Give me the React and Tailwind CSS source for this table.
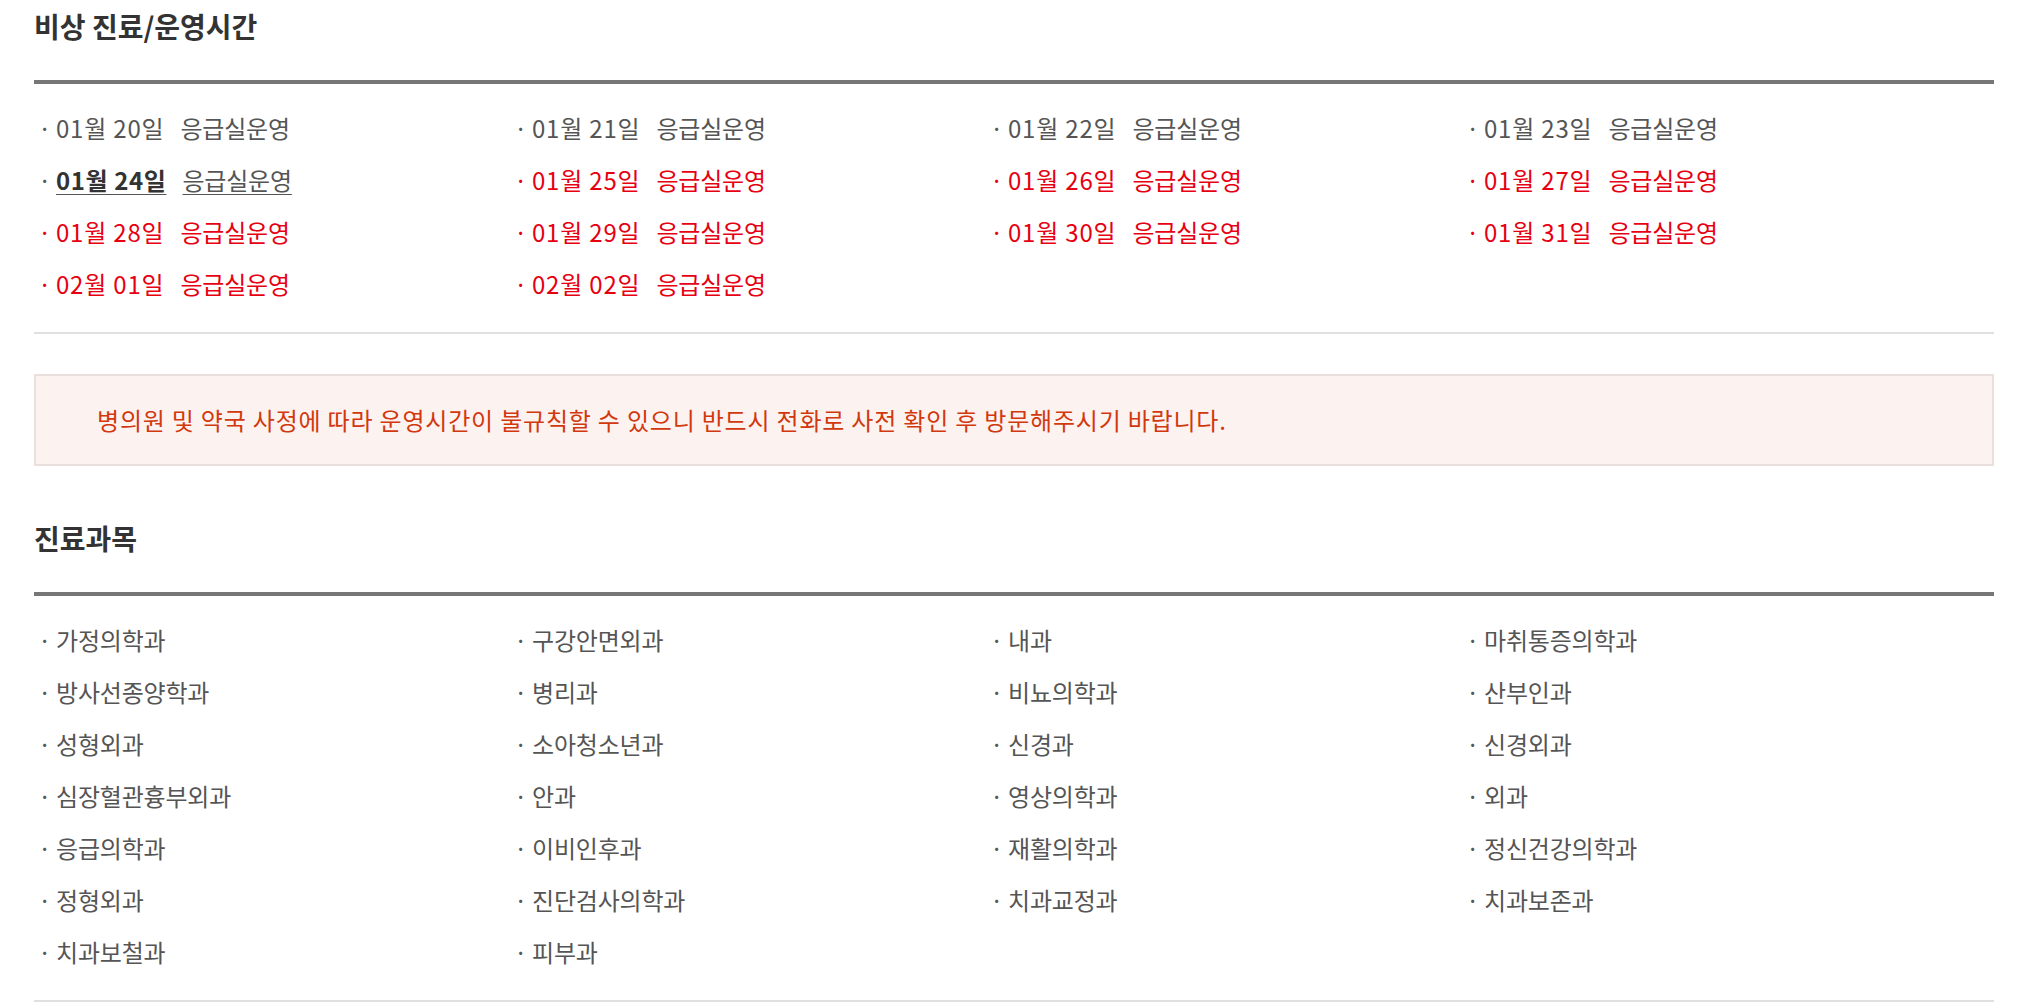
import React from "react";

const dates = [
  { label: "01월 20일", kind: "past" },
  { label: "01월 21일", kind: "past" },
  { label: "01월 22일", kind: "past" },
  { label: "01월 23일", kind: "past" },
  { label: "01월 24일", kind: "today" },
  { label: "01월 25일", kind: "holiday" },
  { label: "01월 26일", kind: "holiday" },
  { label: "01월 27일", kind: "holiday" },
  { label: "01월 28일", kind: "holiday" },
  { label: "01월 29일", kind: "holiday" },
  { label: "01월 30일", kind: "holiday" },
  { label: "01월 31일", kind: "holiday" },
  { label: "02월 01일", kind: "holiday" },
  { label: "02월 02일", kind: "holiday" },
];

const departments = [
  "가정의학과", "구강안면외과", "내과", "마취통증의학과",
  "방사선종양학과", "병리과", "비뇨의학과", "산부인과",
  "성형외과", "소아청소년과", "신경과", "신경외과",
  "심장혈관흉부외과", "안과", "영상의학과", "외과",
  "응급의학과", "이비인후과", "재활의학과", "정신건강의학과",
  "정형외과", "진단검사의학과", "치과교정과", "치과보존과",
  "치과보철과", "피부과",
];

function Dot() {
  return <span className="w-[22px] pl-[4px] shrink-0">·</span>;
}

function DateItem({ label, kind }) {
  if (kind === "today") {
    return (
      <li className="flex items-center text-[#555]">
        <Dot />
        <span className="underline underline-offset-[4px] decoration-[1px]">
          <b className="font-bold text-[#333] tracking-[0.6px]">{label}</b>
          <span className="ml-[16px]">응급실운영</span>
        </span>
      </li>
    );
  }
  return (
    <li className={`flex items-center ${kind === "holiday" ? "text-[#e60012]" : "text-[#555]"}`}>
      <Dot />
      <span className="tracking-[0.8px]">{label}</span>
      <span className="ml-[16px]">응급실운영</span>
    </li>
  );
}

export default function App() {
  return (
    <div className="bg-white min-h-screen">
      <div className="w-[1960px] ml-[34px] font-['Noto_Sans_CJK_KR','Noto_Sans',sans-serif]">
        <h2 className="h-[52px] flex items-center text-[28px] font-bold text-[#333]">
          비상 진료/운영시간
        </h2>

        <ul className="mt-[28px] border-t-4 border-[#777] border-b-2 border-b-[#e0e0e0] pt-[18px] pb-[22px] grid grid-cols-[repeat(4,476px)] auto-rows-[52px] text-[24px] tracking-[-0.2px]">
          {dates.map((d) => (
            <DateItem key={d.label} {...d} />
          ))}
        </ul>

        <div className="mt-[40px] h-[92px] border-2 border-[#eadfdd] bg-[#fcf3f1] flex items-center pl-[61px] text-[24px] tracking-[0.8px] text-[#d2380d]">
          병의원 및 약국 사정에 따라 운영시간이 불규칙할 수 있으니 반드시 전화로 사전 확인 후 방문해주시기 바랍니다.
        </div>

        <h2 className="mt-[46px] h-[52px] flex items-center text-[28px] font-bold text-[#333]">
          진료과목
        </h2>

        <ul className="mt-[28px] border-t-4 border-[#777] border-b-2 border-b-[#e0e0e0] pt-[18px] pb-[22px] grid grid-cols-[repeat(4,476px)] auto-rows-[52px] text-[24px] tracking-[-0.2px] text-[#555]">
          {departments.map((name) => (
            <li key={name} className="flex items-center">
              <Dot />
              <span>{name}</span>
            </li>
          ))}
        </ul>
      </div>
    </div>
  );
}
